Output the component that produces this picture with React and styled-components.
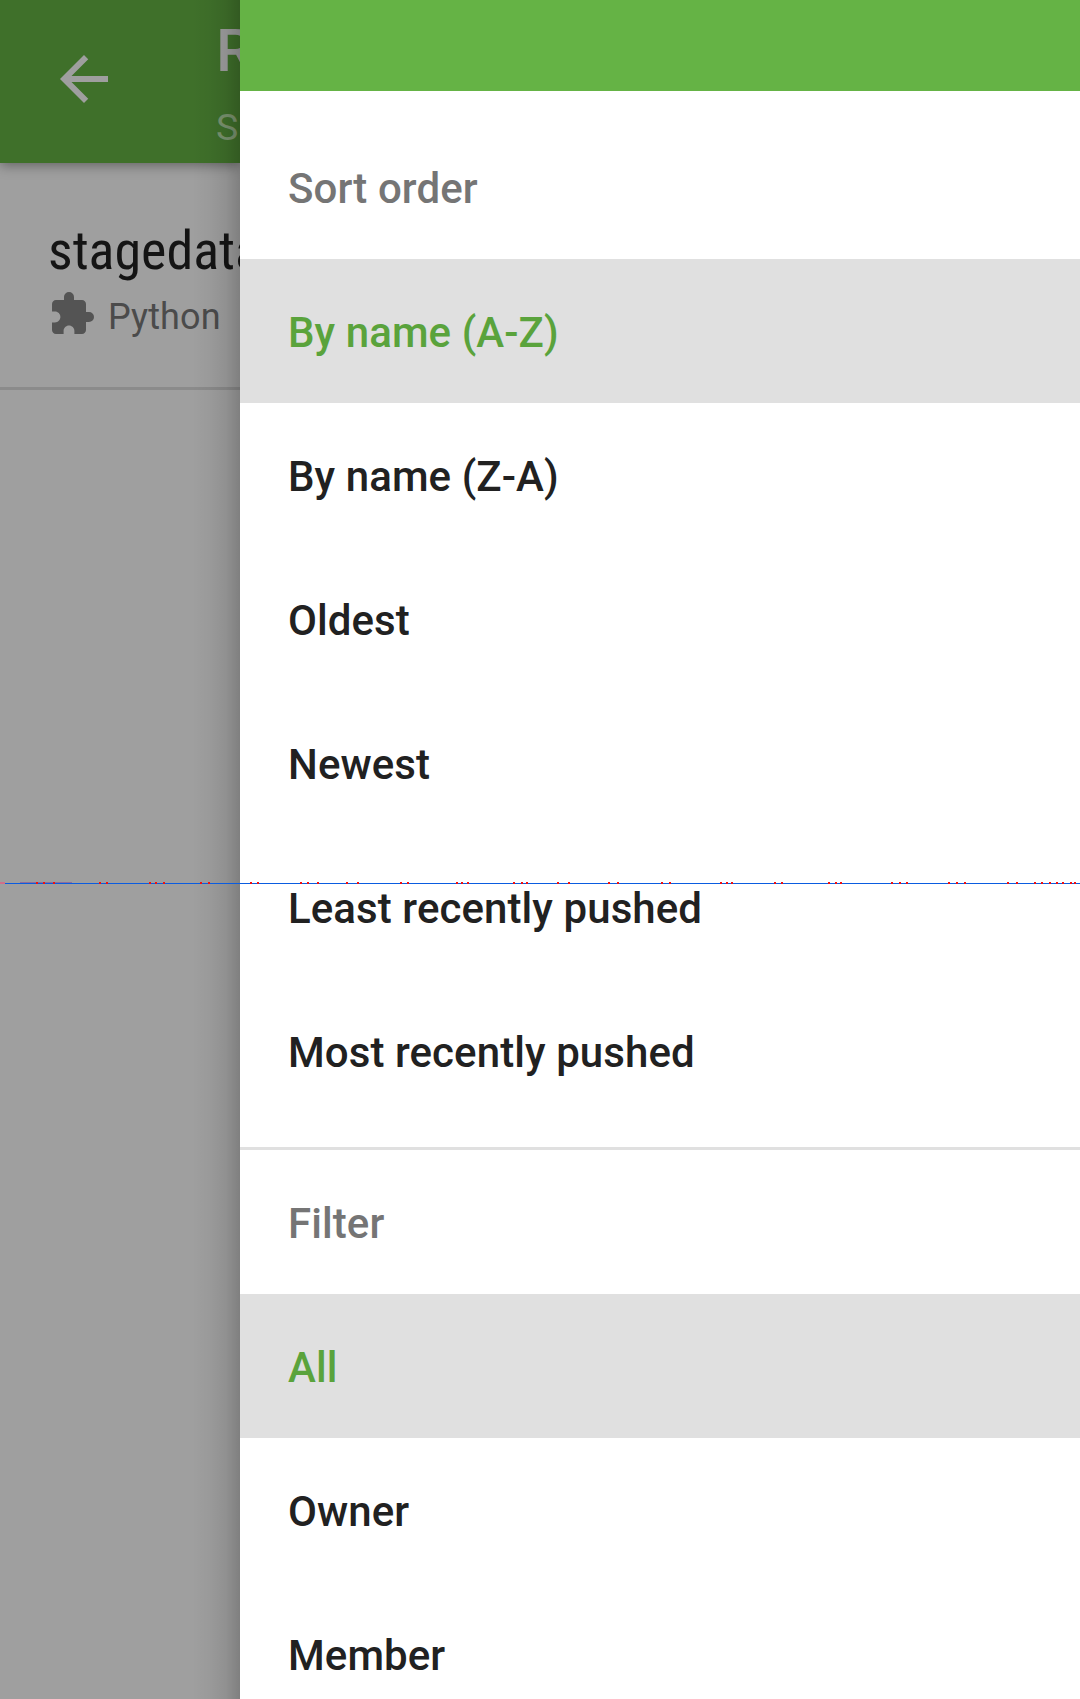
import React from "react";
import styled, { createGlobalStyle } from "styled-components";

const Global = createGlobalStyle`
  * { box-sizing: border-box; }
  body { margin: 0; font-family: Roboto, "Liberation Sans", sans-serif; }
`;

const Screen = styled.div`
  position: relative;
  display: grid;
  grid-template-columns: 240px 840px;
  width: 1080px;
  height: 1699px;
  overflow: hidden;
  background: #9f9f9f;
`;

const Page = styled.main`
  position: relative;
  overflow: hidden;
  white-space: nowrap;
`;

const DrawerShade = styled.div`
  position: absolute;
  top: 0;
  right: 0;
  bottom: 0;
  width: 48px;
  background: linear-gradient(to right, rgba(0, 0, 0, 0), rgba(0, 0, 0, 0.03) 35%, rgba(0, 0, 0, 0.09) 70%, rgba(0, 0, 0, 0.2));
`;

const Toolbar = styled.header`
  position: relative;
  display: flex;
  gap: 96px;
  height: 163px;
  padding-left: 48px;
  background: #3f702a;
  box-shadow: 0 2px 12px rgba(0, 0, 0, 0.4);
`;

const BackIcon = styled.svg`
  flex: none;
  width: 72px;
  height: 72px;
  margin-top: 43px;
  fill: #9f9f9f;
`;

const Titles = styled.div`
  display: flex;
  flex-direction: column;
  padding-top: 15px;
`;

const Title = styled.h1`
  margin: 0;
  font-size: 60px;
  font-weight: 500;
  line-height: 71px;
  color: #9f9f9f;
`;

const Subtitle = styled.div`
  margin-top: 20px;
  font-size: 37.5px;
  line-height: 43px;
  color: #7b9470;
`;

const Repo = styled.article`
  display: flex;
  flex-direction: column;
  height: 227px;
  padding: 56px 0 0 48px;
  border-bottom: 3px solid #8b8b8b;
`;

const RepoName = styled.div`
  font-family: "Roboto Condensed", Roboto, sans-serif;
  font-stretch: 75%;
  font-size: 54px;
  line-height: 63px;
  color: #141414;
`;

const Language = styled.div`
  display: flex;
  align-items: center;
  gap: 12px;
  height: 48px;
  margin-top: 8px;
  font-size: 36px;
  letter-spacing: 0.1px;
  color: #4b4b4b;
`;

const LanguageName = styled.span`
  padding-top: 5px;
`;

const LanguageIcon = styled.svg`
  width: 48px;
  height: 48px;
  fill: #545454;
`;

const Drawer = styled.aside`
  display: flex;
  flex-direction: column;
  background: #fff;
  overflow: hidden;
`;

const StatusBar = styled.div`
  flex: none;
  height: 91px;
  background: #65b345;
`;

const Section = styled.section`
  flex: none;
  padding: ${(p) => (p.$first ? "24px 0" : "0")};
  border-bottom: ${(p) => (p.$first ? "3px solid #e0e0e0" : "0")};
`;

const Row = styled.div`
  display: flex;
  align-items: center;
  height: 144px;
  padding: 4px 48px 0;
  font-size: 42px;
  font-weight: 500;
  line-height: 50px;
  letter-spacing: 0.08px;
  color: ${(p) => (p.$heading ? "#757575" : p.$selected ? "#5aa33c" : "#212121")};
  background: ${(p) => (p.$selected ? "#e0e0e0" : "transparent")};
`;

const Seam = styled.svg`
  position: absolute;
  left: 0;
  top: 882px;
  width: 1080px;
  height: 2px;
`;

const sections = [
  {
    title: "Sort order",
    selected: "By name (A-Z)",
    items: ["By name (A-Z)", "By name (Z-A)", "Oldest", "Newest", "Least recently pushed", "Most recently pushed"],
  },
  { title: "Filter", selected: "All", items: ["All", "Owner", "Member"] },
];

const marks = [
  36, 43, 53, 99, 106, 149, 155, 163, 200, 208, 250, 257, 300, 307, 317, 346, 357,
  400, 407, 456, 461, 467, 513, 521, 526, 557, 568, 608, 617, 661, 669,
  720, 726, 731, 774, 781, 828, 835, 840, 891, 899, 906, 948, 956, 964,
  1007, 1016, 1034, 1041, 1049, 1056, 1062, 1070, 1074,
];

export default function App() {
  return (
    <>
      <Global />
      <Screen>
        <Page>
          <Toolbar>
            <BackIcon viewBox="0 0 24 24">
              <path d="M20 11H7.83l5.59-5.59L12 4l-8 8 8 8 1.41-1.41L7.83 13H20v-2z" />
            </BackIcon>
            <Titles>
              <Title>R</Title>
              <Subtitle>S</Subtitle>
            </Titles>
          </Toolbar>
          <Repo>
            <RepoName>stagedata</RepoName>
            <Language>
              <LanguageIcon viewBox="0 0 24 24">
                <path d="M20.5 11H19V7c0-1.1-.9-2-2-2h-4V3.5a2.5 2.5 0 0 0-5 0V5H4c-1.1 0-1.99.9-1.99 2v3.8H3.5c1.49 0 2.7 1.21 2.7 2.7s-1.21 2.7-2.7 2.7H2V20c0 1.1.9 2 2 2h3.8v-1.5c0-1.49 1.21-2.7 2.7-2.7 1.49 0 2.7 1.21 2.7 2.7V22H17c1.1 0 2-.9 2-2v-4h1.5a2.5 2.5 0 0 0 0-5z" />
              </LanguageIcon>
              <LanguageName>Python</LanguageName>
            </Language>
          </Repo>
          <DrawerShade />
        </Page>
        <Drawer>
          <StatusBar />
          {sections.map((s, i) => (
            <Section key={s.title} $first={i === 0}>
              <Row $heading>{s.title}</Row>
              {s.items.map((item) => (
                <Row key={item} $selected={item === s.selected}>{item}</Row>
              ))}
            </Section>
          ))}
        </Drawer>
        <Seam viewBox="0 0 1080 2" shapeRendering="crispEdges">
          <rect x="20" width="52" height="1" fill="#8c6c9c" />
          <rect x="5" y="1" width="1075" height="1" fill="#0a5ce0" />
          <rect width="5" height="2" fill="#d07088" />
          {marks.map((x) => (
            <rect key={x} x={x} width="2" height="2" fill="#f01010" />
          ))}
        </Seam>
      </Screen>
    </>
  );
}
